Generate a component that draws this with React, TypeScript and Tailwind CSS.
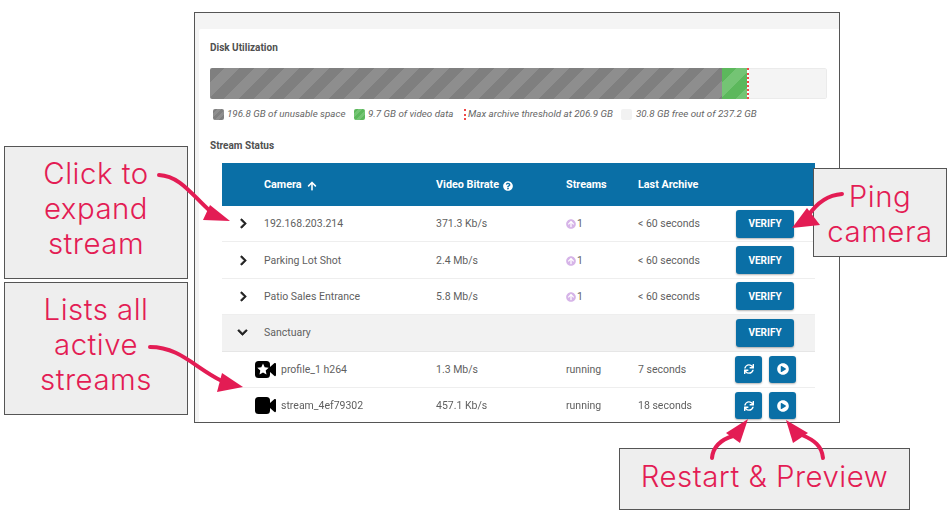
import React from "react";
import { FaArrowUp, FaChevronRight, FaChevronDown, FaQuestionCircle, FaArrowCircleUp, FaSync, FaPlayCircle } from "react-icons/fa";

const rows = [
  { name: "192.168.203.214", rate: "371.3 Kb/s", last: "< 60 seconds" },
  { name: "Parking Lot Shot", rate: "2.4 Mb/s", last: "< 60 seconds" },
  { name: "Patio Sales Entrance", rate: "5.8 Mb/s", last: "< 60 seconds" },
];

function VerifyBtn() {
  return (
    <button className="w-[58px] h-[28px] rounded-[3px] bg-[#0a6fa6] text-white text-[10px] font-bold shadow-[0_1px_2px_rgba(0,0,0,0.3)]">
      VERIFY
    </button>
  );
}

function IconBtn({ children }: { children: React.ReactNode }) {
  return (
    <button className="w-[27px] h-[27px] rounded-[3px] bg-[#0a6fa6] text-white text-[10px] flex items-center justify-center shadow-[0_1px_2px_rgba(0,0,0,0.3)]">
      {children}
    </button>
  );
}

function Swatch({ className }: { className: string }) {
  return <span className={`inline-block w-[11px] h-[11px] rounded-[2px] ${className}`} />;
}

function VideoIcon({ star }: { star: boolean }) {
  return (
    <svg viewBox="0 0 21 17" className="block w-[21px] h-[17px]">
      <rect x="0" y="0" width="15" height="17" rx="3.5" fill="#000" />
      <path d="M15 6 L19.5 2 Q21 1.5 21 3 V14 Q21 15.5 19.5 15 L15 11 Z" fill="#000" />
      {star && <path d="M8 2.6l1.7 3.7 4 .5-3 2.7.8 4-3.5-2-3.5 2 .8-4-3-2.7 4-.5z" fill="#fff" />}
    </svg>
  );
}

const stripes = "bg-[repeating-linear-gradient(135deg,#7f7f7f_0,#7f7f7f_10.6px,#8e8e8e_10.6px,#8e8e8e_21.2px)]";
const greens = "bg-[repeating-linear-gradient(135deg,#5cb85c_0,#5cb85c_10.6px,#74c474_10.6px,#74c474_21.2px)]";
const swatchGrey = "bg-[repeating-linear-gradient(135deg,#7f7f7f_0,#7f7f7f_3px,#8e8e8e_3px,#8e8e8e_6px)]";
const swatchGreen = "bg-[repeating-linear-gradient(135deg,#5cb85c_0,#5cb85c_3px,#74c474_3px,#74c474_6px)]";

function Callout({ className, lines }: { className: string; lines: string[] }) {
  return (
    <div className={`absolute border border-[#555] bg-[#eeeeee] text-[#e31c54] text-[29.4px] leading-[35px] tracking-[0.5px] text-center flex flex-col justify-center font-['Inter',sans-serif] font-light ${className}`}>
      {lines.map((l) => (
        <div key={l}>{l}</div>
      ))}
    </div>
  );
}

export default function App() {
  return (
    <div className="relative w-[952px] h-[516px] bg-white overflow-hidden font-['Roboto',sans-serif] text-[#5f5f5f]">
      <div className="ml-[194px] pt-[12px]">
        <div className="w-[646px] h-[411px] border border-[#555] bg-[#f4f4f4] pt-[16px] pl-[4px] overflow-hidden">
          <div className="bg-white h-full rounded-tl-[2px] pl-[11px] pt-[12px] pr-[12px] blur-[0.5px]">
            <div className="text-[10px] leading-[14px] font-bold text-[#505050]">Disk Utilization</div>
            <div className="mt-[13px] h-[31px] w-[617px] rounded-[2px] flex overflow-hidden">
              <div className={`w-[512px] ${stripes}`} />
              <div className={`w-[25px] ${greens}`} />
              <div className="w-[2px] border-l-2 border-dotted border-[#f04848]" />
              <div className="flex-1 bg-[#f4f4f4] border border-l-0 border-[#ebebeb] rounded-r-[2px]" />
            </div>
            <div className="mt-[8px] pl-[3px] flex items-center text-[9.8px] italic leading-[14px] text-[#666]">
              <Swatch className={swatchGrey} />
              <span className="ml-[3px] w-[118px] whitespace-nowrap">196.8 GB of unusable space</span>
              <Swatch className={`${swatchGreen} ml-[9px]`} />
              <span className="ml-[3px] w-[84px] whitespace-nowrap">9.7 GB of video data</span>
              <span className="ml-[12px] h-[11px] border-l-2 border-dotted border-[#f04848]" />
              <span className="ml-[2px] w-[144px] whitespace-nowrap">Max archive threshold at 206.9 GB</span>
              <span className="ml-[9px] inline-block w-[11px] h-[11px] rounded-[2px] bg-[#f2f2f2]" />
              <span className="ml-[4px] whitespace-nowrap">30.8 GB free out of 237.2 GB</span>
            </div>
            <div className="mt-[18px] text-[10px] leading-[14px] font-bold text-[#505050]">Stream Status</div>
            <div className="mt-[10px] ml-[12px] w-[593px]">
              <div className="h-[43px] bg-[#0a6fa6] flex items-center text-white text-[10.8px] font-bold pt-[2px]">
                <div className="w-[214px] pl-[42px] flex items-center gap-[5px]">Camera <FaArrowUp className="text-[10px]" /></div>
                <div className="w-[130px] flex items-center gap-[4px]">Video Bitrate <FaQuestionCircle className="text-[10px]" /></div>
                <div className="w-[72px]">Streams</div>
                <div>Last Archive</div>
              </div>
              {rows.map((r) => (
                <div key={r.name} className="h-[36.4px] border-b border-[#eeeeee] flex items-center text-[10.5px]">
                  <div className="w-[42px] pl-[16px] text-[#222] text-[11px]"><FaChevronRight className="stroke-[#222] stroke-[30]" /></div>
                  <div className="w-[172px] pt-[1px]">{r.name}</div>
                  <div className="w-[130px] pt-[1px]">{r.rate}</div>
                  <div className="w-[72px] pt-[1px] flex items-center gap-[1px]"><FaArrowCircleUp className="text-[#d6b4e8] text-[10px]" />1</div>
                  <div className="w-[98px] pt-[1px]">{r.last}</div>
                  <VerifyBtn />
                </div>
              ))}
              <div className="h-[36.4px] bg-[#f2f2f2] border-b border-[#e6e6e6] flex items-center text-[10.5px]">
                <div className="w-[42px] pl-[15px] text-[#222] text-[11px]"><FaChevronDown className="stroke-[#222] stroke-[30]" /></div>
                <div className="w-[472px] pt-[1px]">Sanctuary</div>
                <VerifyBtn />
              </div>
              {[
                { name: "profile_1 h264", rate: "1.3 Mb/s", last: "7 seconds", star: true },
                { name: "stream_4ef79302", rate: "457.1 Kb/s", last: "18 seconds", star: false },
              ].map((r) => (
                <div key={r.name} className="h-[36.4px] border-b border-[#eeeeee] flex items-center text-[10.5px]">
                  <div className="w-[59px] pl-[33px]">
                    <VideoIcon star={r.star} />
                  </div>
                  <div className="w-[155px] pt-[1px]">{r.name}</div>
                  <div className="w-[130px] pt-[1px]">{r.rate}</div>
                  <div className="w-[72px] pt-[1px]">running</div>
                  <div className="w-[97px] pt-[1px]">{r.last}</div>
                  <div className="flex gap-[7px]">
                    <IconBtn><FaSync /></IconBtn>
                    <IconBtn><FaPlayCircle className="text-[12px]" /></IconBtn>
                  </div>
                </div>
              ))}
            </div>
          </div>
        </div>
      </div>

      <Callout className="left-[4px] top-[146px] w-[184px] h-[133px] pb-[8px]" lines={["Click to", "expand", "stream"]} />
      <Callout className="left-[4px] top-[282px] w-[184px] h-[133px] pb-[9px]" lines={["Lists all", "active", "streams"]} />
      <Callout className="left-[813px] top-[168px] w-[134px] h-[89px] pt-[3px]" lines={["Ping", "camera"]} />
      <Callout className="left-[619px] top-[448px] w-[291px] h-[62px] pb-[6px]" lines={["Restart & Preview"]} />

      <svg className="absolute left-0 top-0 w-[952px] h-[516px] pointer-events-none" viewBox="0 0 952 516" fill="none">
        <g stroke="#e31c54" strokeWidth="4" strokeLinecap="round">
          <path d="M159 175 C180 176 192 195 210 211" />
          <path d="M150 347 C180 347 195 368 222 381" />
          <path d="M842 194 C828 195 816 204 808 216" />
          <path d="M712 458 C713 447 720 440 733 436" />
          <path d="M823 458 C822 446 814 440 802 435" />
        </g>
        <g fill="#e31c54">
          <path d="M203 220 L230 221 L210 205 Z" />
          <path d="M217 392 L243 387 L222 373 Z" />
          <path d="M792 228 L820 225 L807 208 Z" />
          <path d="M748 419 L726 433 L740 443 Z" />
          <path d="M786 420 L793 443 L808 433 Z" />
        </g>
      </svg>
    </div>
  );
}
